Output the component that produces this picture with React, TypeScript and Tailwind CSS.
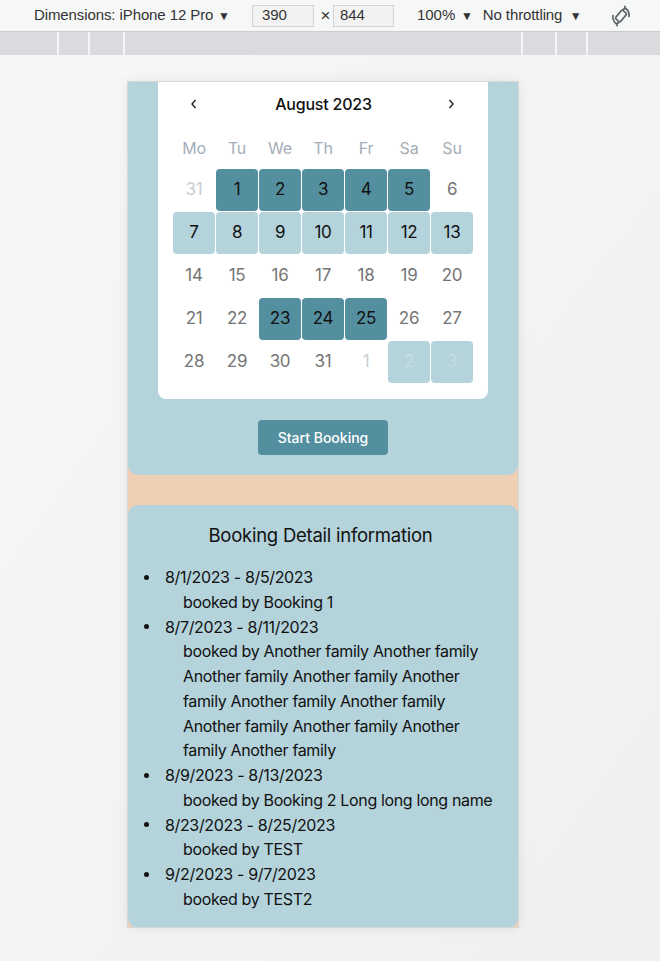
import React from "react";

const font = { fontFamily: "Inter, 'Noto Sans', sans-serif" };

type Cell = { d: number; kind: "prev" | "cur" | "next"; tile?: "dark" | "light" };

const rows: Cell[][] = [
  [
    { d: 31, kind: "prev" },
    { d: 1, kind: "cur", tile: "dark" },
    { d: 2, kind: "cur", tile: "dark" },
    { d: 3, kind: "cur", tile: "dark" },
    { d: 4, kind: "cur", tile: "dark" },
    { d: 5, kind: "cur", tile: "dark" },
    { d: 6, kind: "cur" },
  ],
  [7, 8, 9, 10, 11, 12, 13].map((d) => ({ d, kind: "cur" as const, tile: "light" as const })),
  [14, 15, 16, 17, 18, 19, 20].map((d) => ({ d, kind: "cur" as const })),
  [
    { d: 21, kind: "cur" },
    { d: 22, kind: "cur" },
    { d: 23, kind: "cur", tile: "dark" },
    { d: 24, kind: "cur", tile: "dark" },
    { d: 25, kind: "cur", tile: "dark" },
    { d: 26, kind: "cur" },
    { d: 27, kind: "cur" },
  ],
  [
    { d: 28, kind: "cur" },
    { d: 29, kind: "cur" },
    { d: 30, kind: "cur" },
    { d: 31, kind: "cur" },
    { d: 1, kind: "next" },
    { d: 2, kind: "next", tile: "light" },
    { d: 3, kind: "next", tile: "light" },
  ],
];

function DayCell({ c }: { c: Cell }) {
  let tileCls = "";
  let textCls = "text-[#757575]";
  if (c.tile === "dark") {
    tileCls = "bg-[#548f9f]";
    textCls = "text-[#111111]";
  } else if (c.tile === "light") {
    tileCls = "bg-[#b4d3db]";
    textCls = c.kind === "next" ? "text-[#c9dce1]" : "text-[#111111]";
  } else if (c.kind !== "cur") {
    textCls = "text-[#c9ced4]";
  }
  return (
    <div className="h-[43px] w-[43px] pr-[1px] pb-[1px]">
      <div className={`flex h-full w-full items-center justify-center rounded-[4px] text-[17px] tracking-[-0.3px] ${tileCls} ${textCls}`}>
        {c.d}
      </div>
    </div>
  );
}

function RotateIcon() {
  return (
    <svg width="24" height="24" viewBox="0 0 24 24" fill="none" stroke="#5f6368" strokeWidth="1.7" strokeLinecap="round" strokeLinejoin="round">
      <g transform="rotate(40 12 12)">
        <rect x="8.8" y="6.5" width="6.4" height="11" rx="1.4" />
      </g>
      <path d="M16.5 4.2 A8.5 8.5 0 0 1 20 12.5" />
      <path d="M15.8 2.4 L16.5 4.4 L14.5 5.1" />
      <path d="M7.5 19.8 A8.5 8.5 0 0 1 4 11.5" />
      <path d="M8.2 21.6 L7.5 19.6 L9.5 18.9" />
    </svg>
  );
}

const bookings = [
  { date: "8/1/2023 - 8/5/2023", by: "booked by Booking 1" },
  {
    date: "8/7/2023 - 8/11/2023",
    by: "booked by Another family Another family Another family Another family Another family Another family Another family Another family Another family Another family Another family",
  },
  { date: "8/9/2023 - 8/13/2023", by: "booked by Booking 2 Long long long name" },
  { date: "8/23/2023 - 8/25/2023", by: "booked by TEST" },
  { date: "9/2/2023 - 9/7/2023", by: "booked by TEST2" },
];

export default function App() {
  return (
    <div className="flex h-[961px] w-[660px] flex-col overflow-hidden bg-[#f4f6f5]" style={font}>
      {/* DevTools toolbar */}
      <div
        className="flex h-[32px] items-center border-b border-[#c9cbcf] bg-[#f6f7f7] text-[15px] text-[#333333]"
        style={{ fontFamily: "'Liberation Sans', Arial, sans-serif" }}
      >
        <span className="ml-[34px] w-[180px] whitespace-nowrap tracking-[-0.1px]">Dimensions: iPhone 12 Pro</span>
        <span className="ml-[4px] text-[12px]">▼</span>
        <div className="ml-[22px] flex h-[22px] w-[62px] items-center border border-[#d2d2d2] bg-[#f2f2f2] pl-[9px]">390</div>
        <span className="ml-[4px] w-[15px] text-center text-[17px]">×</span>
        <div className="flex h-[22px] w-[61px] items-center border border-[#d2d2d2] bg-[#f2f2f2] pl-[6px]">844</div>
        <span className="ml-[23px] w-[41px] whitespace-nowrap">100%</span>
        <span className="ml-[3px] text-[12px]">▼</span>
        <span className="ml-[10px] w-[84px] whitespace-nowrap tracking-[-0.1px]">No throttling</span>
        <span className="ml-[3px] text-[12px]">▼</span>
        <div className="ml-[27px] flex items-center">
          <RotateIcon />
        </div>
      </div>
      {/* Ruler bar */}
      <div className="flex h-[23px] bg-[#d9dbdf]">
        <div className="w-[57px]" />
        <div className="w-[2px] bg-[#f4f5f6]" />
        <div className="w-[29px]" />
        <div className="w-[2px] bg-[#f4f5f6]" />
        <div className="w-[33px]" />
        <div className="w-[2px] bg-[#f4f5f6]" />
        <div className="flex-1" />
        <div className="w-[2px] bg-[#f4f5f6]" />
        <div className="w-[32px]" />
        <div className="w-[2px] bg-[#f4f5f6]" />
        <div className="w-[29px]" />
        <div className="w-[2px] bg-[#f4f5f6]" />
        <div className="w-[72px]" />
      </div>

      {/* Page area */}
      <div className="flex flex-1 bg-gradient-to-br from-[#f6f7f7] to-[#eff1f0] pl-[127px] pt-[26px]">
        <div className="h-[847px] w-[392px] overflow-hidden border border-[#d6d8d8] bg-[#f0d0b4] shadow-[0_0_12px_rgba(0,0,0,0.08)]">
          {/* Top card */}
          <div className="rounded-b-[10px] bg-[#b4d3db] px-[30px] pb-[20px]">
            <div className="rounded-b-[8px] bg-white pb-[15px] pl-[15px] pr-[16px]">
              <div className="flex h-[44px] items-center justify-between px-[16px] text-[16px] font-medium text-[#111111]">
                <svg width="10" height="12" viewBox="0 0 10 12" fill="none" stroke="#222" strokeWidth="1.4">
                  <path d="M6.5 2 L3 6 L6.5 10" />
                </svg>
                <span className="ml-[2px] tracking-[-0.2px]">August 2023</span>
                <svg width="10" height="12" viewBox="0 0 10 12" fill="none" stroke="#222" strokeWidth="1.4">
                  <path d="M3.5 2 L7 6 L3.5 10" />
                </svg>
              </div>
              <div className="grid grid-cols-[repeat(7,43px)]">
                {["Mo", "Tu", "We", "Th", "Fr", "Sa", "Su"].map((w) => (
                  <div key={w} className="flex h-[43px] items-center justify-center pr-[1px] text-[16px] tracking-[-0.2px] text-[#a4adb8]">
                    {w}
                  </div>
                ))}
                {rows.flat().map((c, i) => (
                  <DayCell key={i} c={c} />
                ))}
              </div>
            </div>
            <div className="flex justify-center pt-[21px]">
              <button className="h-[35px] w-[130px] rounded-[4px] bg-[#548f9f] text-[14px] font-medium text-white">
                Start Booking
              </button>
            </div>
          </div>

          <div className="h-[30px]" />

          {/* Booking details card */}
          <div className="rounded-[10px] bg-[#b4d3db] pb-[16px] pl-[15px] pr-[20px] pt-[17px] text-[#111111]">
            <h2 className="text-center text-[18.5px] leading-[26px] tracking-[-0.25px]">Booking Detail information</h2>
            <ul className="mt-[17px] text-[16px] leading-[24.75px] tracking-[-0.35px]">
              {bookings.map((b) => (
                <li key={b.date} className="flex">
                  <div className="flex h-[24.75px] w-[22px] shrink-0 items-center">
                    <div className="ml-[1px] h-[5px] w-[5px] rounded-full bg-[#111111]" />
                  </div>
                  <div className="flex-1">
                    <div>{b.date}</div>
                    <div className="pl-[18px]">{b.by}</div>
                  </div>
                </li>
              ))}
            </ul>
          </div>
        </div>
      </div>
    </div>
  );
}
